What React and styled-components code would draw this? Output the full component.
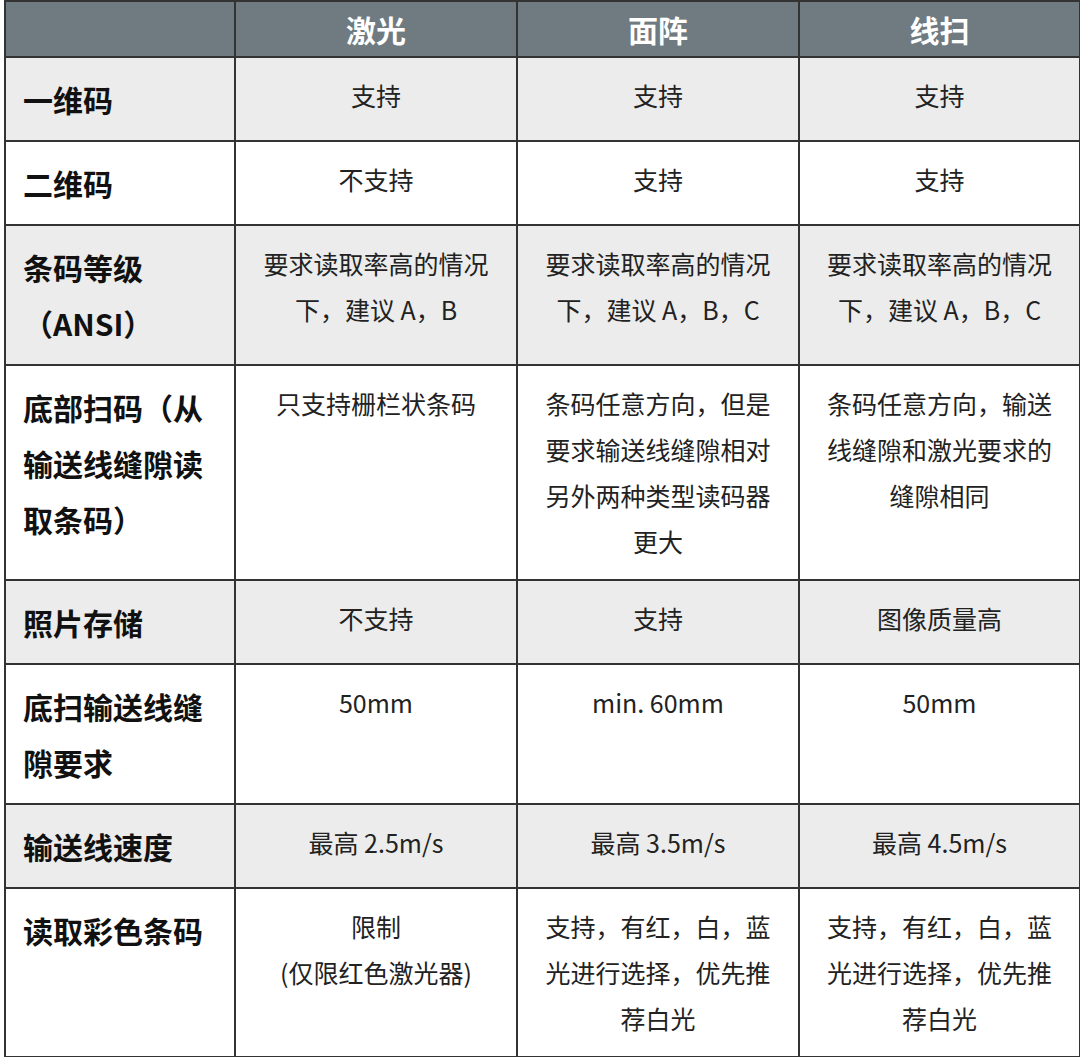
import styled, { createGlobalStyle } from "styled-components";

const GlobalStyle = createGlobalStyle`
    html, body {
        margin: 0;
        padding: 0;
        background: #ffffff;
    }
    body {
        font-family: "Noto Sans CJK SC", "Noto Sans", sans-serif;
        color: #222222;
    }
`;

const Page = styled.div`
    padding: 0 0 0 4px;
`;

const Table = styled.table`
    width: 1075px;
    table-layout: fixed;
    border-collapse: collapse;
    border: 2px solid #333333;
`;

const HeadRow = styled.tr`
    background: #6f7b81;
`;

const HeadCell = styled.th`
    height: 54px;
    padding: 0;
    border: 2px solid #333333;
    color: #ffffff;
    font-size: 30px;
    font-weight: 700;
    line-height: 54px;
    text-align: center;
    vertical-align: middle;
`;

const Row = styled.tr`
    background: ${(props) => (props.$shaded ? "#ebeceb" : "#ffffff")};
`;

const LabelCell = styled.th`
    padding: 13px 8px 13px 17px;
    border: 2px solid #333333;
    color: #111111;
    font-size: 30px;
    font-weight: 700;
    line-height: 56px;
    text-align: left;
    vertical-align: top;
`;

const ValueCell = styled.td`
    padding: 14px 10px 15px;
    border: 2px solid #333333;
    color: #222222;
    font-size: 25px;
    font-weight: 400;
    line-height: 46px;
    text-align: center;
    vertical-align: top;
`;

const columns = ["激光", "面阵", "线扫"];

const rows = [
    {
        label: ["一维码"],
        values: [["支持"], ["支持"], ["支持"]],
    },
    {
        label: ["二维码"],
        values: [["不支持"], ["支持"], ["支持"]],
    },
    {
        label: ["条码等级", "（ANSI）"],
        values: [
            ["要求读取率高的情况", "下，建议 A，B"],
            ["要求读取率高的情况", "下，建议 A，B，C"],
            ["要求读取率高的情况", "下，建议 A，B，C"],
        ],
    },
    {
        label: ["底部扫码（从", "输送线缝隙读", "取条码）"],
        values: [
            ["只支持栅栏状条码"],
            ["条码任意方向，但是", "要求输送线缝隙相对", "另外两种类型读码器", "更大"],
            ["条码任意方向，输送", "线缝隙和激光要求的", "缝隙相同"],
        ],
    },
    {
        label: ["照片存储"],
        values: [["不支持"], ["支持"], ["图像质量高"]],
    },
    {
        label: ["底扫输送线缝", "隙要求"],
        values: [["50mm"], ["min. 60mm"], ["50mm"]],
    },
    {
        label: ["输送线速度"],
        values: [["最高 2.5m/s"], ["最高 3.5m/s"], ["最高 4.5m/s"]],
    },
    {
        label: ["读取彩色条码"],
        values: [
            ["限制", "(仅限红色激光器)"],
            ["支持，有红，白，蓝", "光进行选择，优先推", "荐白光"],
            ["支持，有红，白，蓝", "光进行选择，优先推", "荐白光"],
        ],
    },
];

function Lines({ lines }) {
    return lines.map((line, i) => (
        <span key={i}>
            {i > 0 && <br />}
            {line}
        </span>
    ));
}

export default function App() {
    return (
        <>
            <GlobalStyle />
            <Page>
                <Table>
                    <colgroup>
                        <col style={{ width: 230 }} />
                        <col style={{ width: 282 }} />
                        <col style={{ width: 282 }} />
                        <col style={{ width: 281 }} />
                    </colgroup>
                    <thead>
                        <HeadRow>
                            <HeadCell />
                            {columns.map((name) => (
                                <HeadCell key={name}>{name}</HeadCell>
                            ))}
                        </HeadRow>
                    </thead>
                    <tbody>
                        {rows.map((row, i) => (
                            <Row key={i} $shaded={i % 2 === 0}>
                                <LabelCell>
                                    <Lines lines={row.label} />
                                </LabelCell>
                                {row.values.map((value, j) => (
                                    <ValueCell key={j}>
                                        <Lines lines={value} />
                                    </ValueCell>
                                ))}
                            </Row>
                        ))}
                    </tbody>
                </Table>
            </Page>
        </>
    );
}
